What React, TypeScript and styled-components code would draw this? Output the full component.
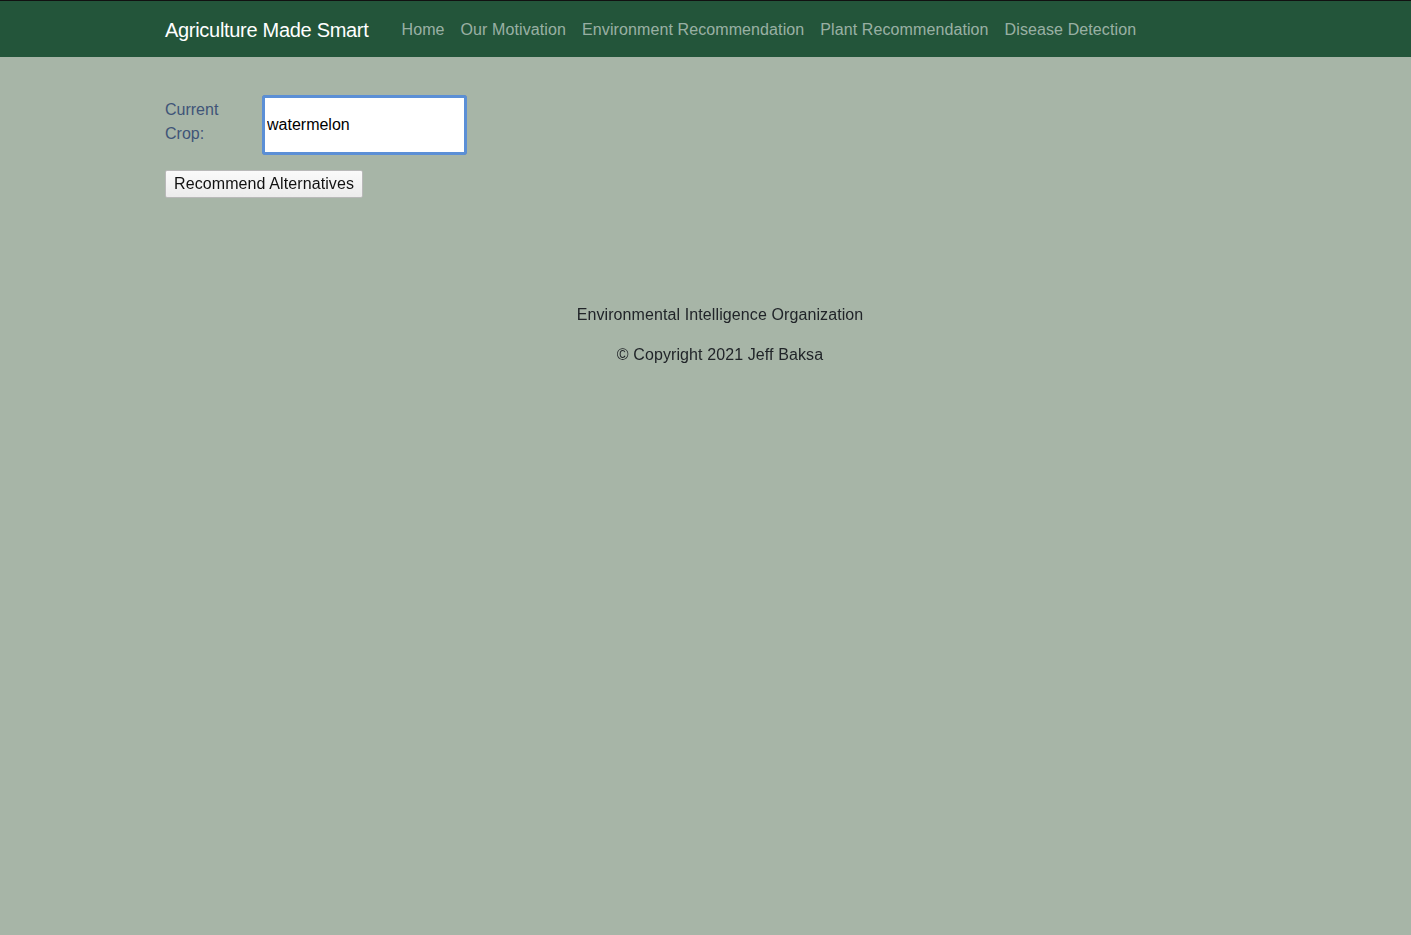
import React from "react";
import styled, { createGlobalStyle } from "styled-components";

const Global = createGlobalStyle`
  html, body { margin: 0; padding: 0; }
  body {
    background: #a7b5a7;
    font-family: "Liberation Sans", Arial, sans-serif;
    min-height: 935px;
    border-top: 1px solid #111;
  }
`;

const NavBar = styled.nav`
  height: 56px;
  background: #23553a;
  display: flex;
  align-items: center;
`;

const NavInner = styled.div`
  margin-left: 165px;
  display: flex;
  align-items: center;
  padding-top: 2px;
`;

const Brand = styled.a`
  color: #ffffff;
  font-size: 20px;
  margin-right: 25px;
  letter-spacing: -0.3px;
  text-decoration: none;
`;

const NavLink = styled.a`
  color: rgba(255, 255, 255, 0.55);
  font-size: 16px;
  padding: 0 8px;
  letter-spacing: 0.1px;
  text-decoration: none;
`;

const Main = styled.main`
  width: 1110px;
  margin-left: 165px;
  padding-top: 38px;
`;

const FormRow = styled.div`
  display: flex;
  align-items: flex-start;
`;

const Label = styled.label`
  width: 80px;
  margin: 3px 17px 0 0;
  color: #3f5478;
  font-size: 16px;
  line-height: 24px;
`;

const Input = styled.input`
  box-sizing: border-box;
  width: 205px;
  height: 60px;
  padding: 0 4px;
  font-family: "Liberation Sans", Arial, sans-serif;
  font-size: 16px;
  color: #000;
  caret-color: #000;
  background: #fff;
  border: 1px solid #767676;
  border-radius: 3px;
  outline: 3px solid #5b8fd6;
  outline-offset: -3px;
`;

const Button = styled.button`
  margin-top: 15px;
  height: 28px;
  padding: 0 8px;
  font-family: "Liberation Sans", Arial, sans-serif;
  font-size: 16px;
  letter-spacing: 0.1px;
  color: #111;
  background: linear-gradient(#fafafa, #ececec);
  border: 1px solid #b9b9b9;
  border-radius: 2px;
`;

const Footer = styled.footer`
  width: 1110px;
  margin-left: 165px;
  margin-top: 105px;
  text-align: center;
  color: #212529;
  font-size: 16px;
  letter-spacing: 0.1px;
`;

const FooterLine = styled.p`
  margin: 0 0 16px;
  line-height: 24px;
`;

export default function App() {
  return (
    <>
      <Global />
      <NavBar>
        <NavInner>
          <Brand href="#">Agriculture Made Smart</Brand>
          <NavLink href="#">Home</NavLink>
          <NavLink href="#">Our Motivation</NavLink>
          <NavLink href="#">Environment Recommendation</NavLink>
          <NavLink href="#">Plant Recommendation</NavLink>
          <NavLink href="#">Disease Detection</NavLink>
        </NavInner>
      </NavBar>
      <Main>
        <FormRow>
          <Label htmlFor="crop">Current Crop:</Label>
          <Input id="crop" defaultValue="watermelon" autoFocus />
        </FormRow>
        <Button>Recommend Alternatives</Button>
      </Main>
      <Footer>
        <FooterLine>Environmental Intelligence Organization</FooterLine>
        <FooterLine>© Copyright 2021 Jeff Baksa</FooterLine>
      </Footer>
    </>
  );
}
